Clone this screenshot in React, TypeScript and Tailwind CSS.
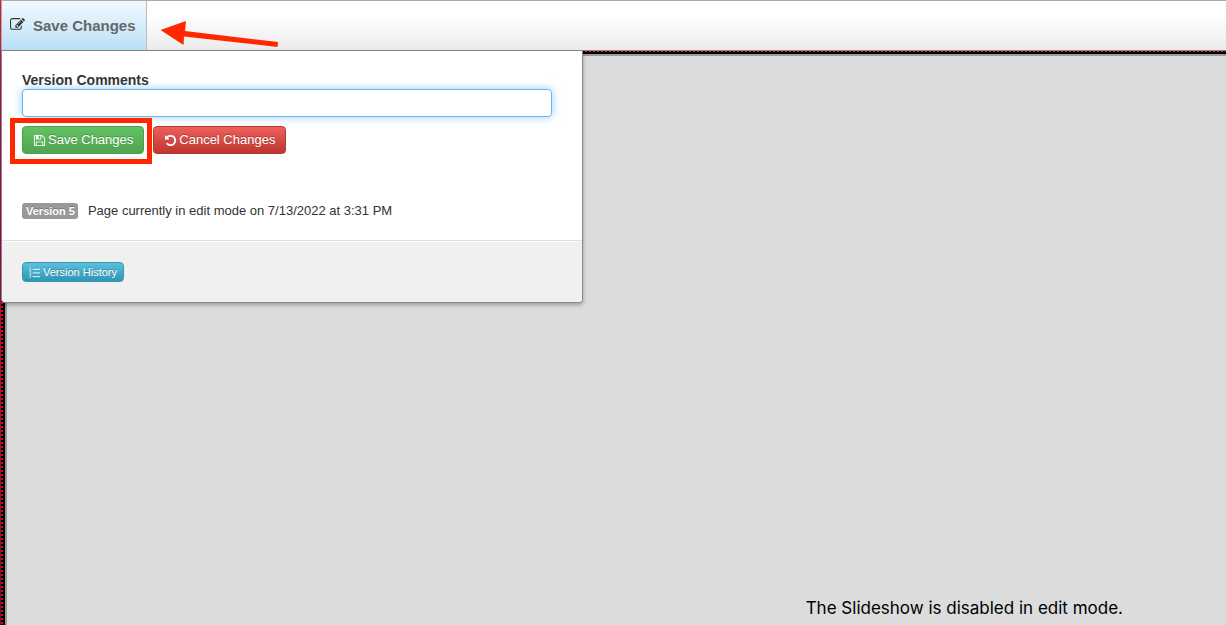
import React from 'react'

interface IconProps {
  className?: string
}

function EditIcon({ className }: IconProps) {
  return (
    <svg viewBox="0 0 1792 1792" fill="currentColor" className={className} aria-hidden="true">
      <path d="M888 1184l116-116-152-152-116 116v56h96v96h56zm440-720q-16-16-33 1l-350 350q-17 17-1 33t33-1l350-350q17-17 1-33zm80 594v190q0 119-84.5 203.5t-203.5 84.5h-832q-119 0-203.5-84.5t-84.5-203.5v-832q0-119 84.5-203.5t203.5-84.5h832q63 0 117 25 15 7 18 23 3 17-9 29l-49 49q-14 14-32 8-23-6-45-6h-832q-66 0-113 47t-47 113v832q0 66 47 113t113 47h832q66 0 113-47t47-113v-126q0-13 9-22l64-64q15-15 35-7t20 29zm-96-738l288 288-672 672h-288v-288zm444 132l-92 92-288-288 92-92q28-28 68-28t68 28l152 152q28 28 28 68t-28 68z" />
    </svg>
  )
}

function SaveIcon({ className }: IconProps) {
  return (
    <svg viewBox="0 0 1792 1792" fill="currentColor" className={className} aria-hidden="true">
      <path d="M512 1536h768v-384h-768v384zm896 0h128v-896q0-14-10-38.5t-20-34.5l-281-281q-10-10-34-20t-39-10v416q0 40-28 68t-68 28h-576q-40 0-68-28t-28-68v-416h-128v1280h128v-416q0-40 28-68t68-28h832q40 0 68 28t28 68v416zm-384-928v-320q0-13-9.5-22.5t-22.5-9.5h-192q-13 0-22.5 9.5t-9.5 22.5v320q0 13 9.5 22.5t22.5 9.5h192q13 0 22.5-9.5t9.5-22.5zm640 32v928q0 40-28 68t-68 28h-1344q-40 0-68-28t-28-68v-1344q0-40 28-68t68-28h928q40 0 88 20t76 48l280 280q28 28 48 76t20 88z" />
    </svg>
  )
}

function UndoIcon({ className }: IconProps) {
  return (
    <svg viewBox="0 0 1792 1792" fill="currentColor" className={className} aria-hidden="true">
      <path d="M1664 896q0 156-61 298t-164 245-245 164-298 61q-172 0-327-72.5t-264-204.5q-7-10-6.5-22.5t8.5-20.5l137-138q10-9 25-9 16 2 23 12 73 95 179 147t225 52q104 0 198.5-40.5t163.5-109.5 109.5-163.5 40.5-198.5-40.5-198.5-109.5-163.5-163.5-109.5-198.5-40.5q-98 0-188 35.5t-160 101.5l137 138q31 30 14 69-17 40-59 40h-448q-26 0-45-19t-19-45v-448q0-42 40-59 39-17 69 14l130 129q107-101 244.5-156.5t284.5-55.5q156 0 298 61t245 164 164 245 61 298z" />
    </svg>
  )
}

function ListIcon({ className }: IconProps) {
  return (
    <svg viewBox="0 0 12 12" fill="none" stroke="currentColor" className={className} aria-hidden="true">
      <path d="M4 2.5h8M4 6.5h8M4 10.5h8" />
      <path strokeWidth="0.6" d="M0.5 1l1-.6v3M0.4 3.4h2M0.4 5q1-.8 1.7 0t-1.6 2.4h2M0.4 8.6h1.8l-.9 1.2q1.2.2.8 1.2t-1.8.4" />
    </svg>
  )
}

export default function App() {
  return (
    <div className="relative flex min-h-screen flex-col bg-[#dcdcdc] font-['Liberation_Sans',Arial,sans-serif] text-[13px] leading-5 text-[#333]">
      {/* page edge */}
      <div className="absolute inset-y-0 left-0 w-px bg-linear-to-b from-[#cf1f3c] via-[#a8005a] via-40% to-[#3d2347]" />

      <header className="relative z-10 ml-px flex h-[51px] border-y border-t-[#aaa] border-b-[#888] bg-linear-to-b from-white from-30% to-[#ebebeb]">
        <button
          type="button"
          className="flex items-center gap-2 border-x border-l-[#aaa] border-r-[#bbb] bg-linear-to-b from-[#f3f9fe] to-[#b9e0f7] pr-[10px] pl-2 text-[15px] font-bold text-[#666]"
        >
          <EditIcon className="mb-[3px] size-[15px] text-[#333]" />
          Save Changes
        </button>
        <svg viewBox="0 0 120 30" className="absolute top-4 left-[159px] h-[30px] w-[120px]" aria-hidden="true">
          <path d="M0.5 13L26 4L25 14L118 25L117.5 30L24 19.5L23.5 28Z" fill="#ff2600" />
        </svg>
      </header>

      {/* dotted outline of the editable region */}
      <main className="ml-px flex flex-1 flex-col bg-black">
        <div className="mb-[2px] h-px bg-[repeating-linear-gradient(to_right,#e01b1b_0_2px,#000_2px_4px)]" />
        <div className="flex flex-1">
          <div className="mr-[2px] w-[2px] bg-[repeating-linear-gradient(to_bottom,#ff0000_0_2px,#000_2px_4px)]" />
          <div className="flex flex-1 flex-col justify-end border-t-2 border-l-2 border-[#999] bg-[#dcdcdc]">
            <p className="mr-[103px] mb-[5px] self-end font-['Inter',sans-serif] text-[17px] leading-6 text-black">
              The Slideshow is disabled in edit mode.
            </p>
          </div>
        </div>
      </main>

      <section className="absolute top-[51px] left-px z-20 w-[582px] rounded-b border border-t-0 border-[#888] bg-white shadow-[0_2px_4px_rgba(0,0,0,0.3)]">
        <div className="flex flex-col px-5 pt-5 pb-[19px]">
          <label htmlFor="comments" className="text-sm leading-[18px] font-bold">
            Version Comments
          </label>
          <input
            id="comments"
            type="text"
            className="mr-[10px] h-7 rounded border border-[#6db3ee] px-2 shadow-[0_0_8px_rgba(82,168,236,0.6)] outline-none"
          />
          <div className="mt-[9px] flex gap-[9px]">
            <div className="relative">
              <button
                type="button"
                className="flex h-7 items-center gap-[2px] rounded border border-[#4b9c4b] bg-linear-to-b from-[#62c462] to-[#51a351] px-[10px] text-white text-shadow-[0_-1px_0_rgba(0,0,0,0.25)]"
              >
                <SaveIcon className="size-[13px]" />
                Save Changes
              </button>
              <div className="pointer-events-none absolute -top-2 -right-2 -bottom-[10px] -left-3 border-5 border-[#ff2600]" />
            </div>
            <button
              type="button"
              className="flex h-7 items-center gap-[2px] rounded border border-[#b5352f] bg-linear-to-b from-[#ee5f5b] to-[#bd362f] px-[10px] text-white text-shadow-[0_-1px_0_rgba(0,0,0,0.25)]"
            >
              <UndoIcon className="size-[13px]" />
              Cancel Changes
            </button>
          </div>
          <div className="mt-[47px] flex items-center gap-[10px]">
            <span className="rounded-[3px] bg-[#999] pr-[3px] pl-1 text-[11px] leading-4 font-bold text-white text-shadow-[0_-1px_0_rgba(0,0,0,0.25)]">
              Version 5
            </span>
            <span>Page currently in edit mode on 7/13/2022 at 3:31 PM</span>
          </div>
        </div>
        <div className="rounded-b border-t border-[#ddd] bg-[#f0f0f0] px-5 pt-[21px] pb-5 inset-shadow-[0_1px_0_#fff]">
          <button
            type="button"
            className="flex h-5 items-center gap-[3px] rounded border border-[#3597b3] bg-linear-to-b from-[#5bc0de] to-[#2f96b4] px-[6px] text-[11px] text-white text-shadow-[0_-1px_0_rgba(0,0,0,0.25)]"
          >
            <ListIcon className="size-[11px]" />
            Version History
          </button>
        </div>
      </section>
    </div>
  )
}
